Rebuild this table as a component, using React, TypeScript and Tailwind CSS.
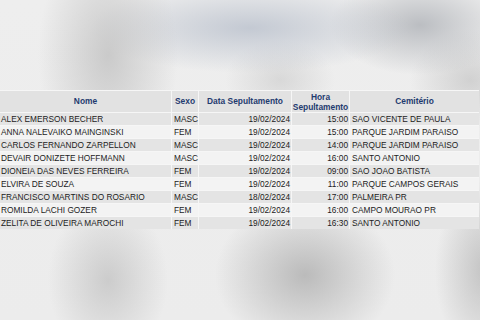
import React from "react";

const rows: [string, string, string, string, string][] = [
  ["ALEX EMERSON BECHER", "MASC", "19/02/2024", "15:00", "SAO VICENTE DE PAULA"],
  ["ANNA NALEVAIKO MAINGINSKI", "FEM", "19/02/2024", "15:00", "PARQUE JARDIM PARAISO"],
  ["CARLOS FERNANDO ZARPELLON", "MASC", "19/02/2024", "14:00", "PARQUE JARDIM PARAISO"],
  ["DEVAIR DONIZETE HOFFMANN", "MASC", "19/02/2024", "16:00", "SANTO ANTONIO"],
  ["DIONEIA DAS NEVES FERREIRA", "FEM", "19/02/2024", "09:00", "SAO JOAO BATISTA"],
  ["ELVIRA DE SOUZA", "FEM", "19/02/2024", "11:00", "PARQUE CAMPOS GERAIS"],
  ["FRANCISCO MARTINS DO ROSARIO", "MASC", "18/02/2024", "17:00", "PALMEIRA PR"],
  ["ROMILDA LACHI GOZER", "FEM", "19/02/2024", "16:00", "CAMPO MOURAO PR"],
  ["ZELITA DE OLIVEIRA MAROCHI", "FEM", "19/02/2024", "16:30", "SANTO ANTONIO"],
];

export default function App() {
  return (
    <div
      className="w-[480px] h-[320px] overflow-hidden pt-[90px] bg-[radial-gradient(ellipse_70px_120px_at_108px_55px,rgba(190,190,190,0.75),rgba(190,190,190,0)),radial-gradient(ellipse_160px_45px_at_250px_28px,rgba(185,192,204,0.8),rgba(185,192,204,0)),radial-gradient(ellipse_90px_50px_at_420px_25px,rgba(178,181,186,0.85),rgba(178,181,186,0)),radial-gradient(ellipse_60px_50px_at_470px_80px,rgba(190,190,190,0.6),rgba(190,190,190,0)),radial-gradient(ellipse_55px_40px_at_280px_80px,rgba(195,195,195,0.5),rgba(195,195,195,0)),radial-gradient(ellipse_60px_80px_at_108px_280px,rgba(190,190,190,0.7),rgba(190,190,190,0)),radial-gradient(ellipse_90px_75px_at_305px_275px,rgba(178,178,178,0.85),rgba(178,178,178,0)),radial-gradient(ellipse_50px_90px_at_485px_270px,rgba(185,185,185,0.8),rgba(185,185,185,0)),linear-gradient(#eeeeee,#ececec)]"
      style={{ fontFamily: '"Liberation Sans", Arial, sans-serif' }}
    >
      <div className="w-[479px] grid grid-cols-[171px_26px_92px_57px_1fr] gap-px bg-[#f6f6f6] border-t border-[#f6f6f6]">
        <div className="h-[21px] bg-[#e2e2e2] flex items-center justify-center text-[8.4px] font-bold text-[#1f3b6f]">Nome</div>
        <div className="h-[21px] bg-[#e2e2e2] flex items-center justify-center text-[8.4px] font-bold text-[#1f3b6f]">Sexo</div>
        <div className="h-[21px] bg-[#e2e2e2] flex items-center justify-center text-[8.4px] font-bold text-[#1f3b6f]">Data Sepultamento</div>
        <div className="h-[21px] bg-[#e2e2e2] flex flex-col items-center justify-center text-[8.4px] leading-[10px] font-bold text-[#1f3b6f]">
          <span>Hora</span>
          <span>Sepultamento</span>
        </div>
        <div className="h-[21px] bg-[#e2e2e2] flex items-center justify-center text-[8.4px] font-bold text-[#1f3b6f]">Cemitério</div>
        {rows.map((r, i) => {
          const bg = i % 2 === 0 ? "bg-[#e4e4e4]" : "bg-[#f3f3f3]";
          return (
            <React.Fragment key={i}>
              <div className={`${bg} h-[12px] leading-[12px] text-[8.3px] text-[#1c1c1c] pl-px whitespace-nowrap`}>{r[0]}</div>
              <div className={`${bg} h-[12px] leading-[12px] text-[8.3px] text-[#1c1c1c] pl-[2px] whitespace-nowrap`}>{r[1]}</div>
              <div className={`${bg} h-[12px] leading-[12px] text-[8.3px] text-[#1c1c1c] text-right pr-px whitespace-nowrap`}>{r[2]}</div>
              <div className={`${bg} h-[12px] leading-[12px] text-[8.3px] text-[#1c1c1c] text-right pr-px whitespace-nowrap`}>{r[3]}</div>
              <div className={`${bg} h-[12px] leading-[12px] text-[8.3px] text-[#1c1c1c] pl-[2px] whitespace-nowrap`}>{r[4]}</div>
            </React.Fragment>
          );
        })}
      </div>
    </div>
  );
}
